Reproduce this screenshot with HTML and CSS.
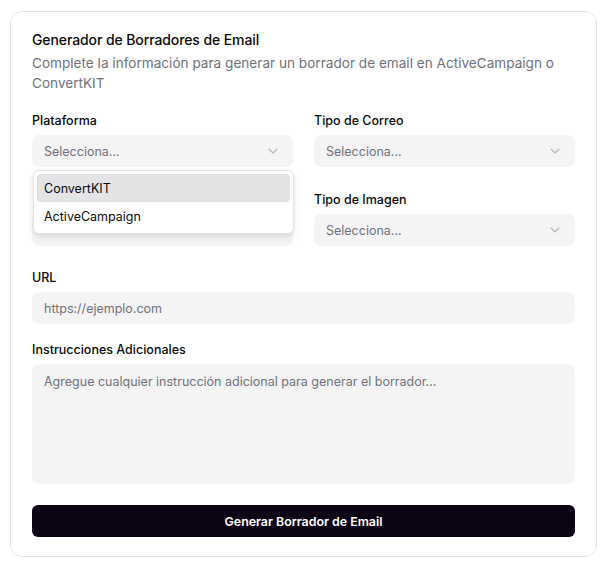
FILE: index.html
```html
<!DOCTYPE html>
<html lang="es">
<head>
<meta charset="utf-8">
<title>Generador de Borradores de Email</title>
<link rel="stylesheet" href="styles.css">
</head>
<body>
<div class="card">
  <h1 class="title">Generador de Borradores de Email</h1>
  <p class="subtitle">Complete la información para generar un borrador de email en ActiveCampaign o ConvertKIT</p>

  <div class="grid">
    <div class="field">
      <label class="label">Plataforma</label>
      <div class="select-wrap">
        <div class="select">
          <span>Selecciona...</span>
          <svg class="chev" width="10" height="6" viewBox="0 0 10 6"><path d="M1 1l4 4 4-4" fill="none" stroke="currentColor" stroke-width="1.1" stroke-linecap="round" stroke-linejoin="round"/></svg>
        </div>
        <div class="menu">
          <div class="item active">ConvertKIT</div>
          <div class="item">ActiveCampaign</div>
        </div>
      </div>
    </div>
    <div class="field">
      <label class="label">Tipo de Correo</label>
      <div class="select">
        <span>Selecciona...</span>
        <svg class="chev" width="10" height="6" viewBox="0 0 10 6"><path d="M1 1l4 4 4-4" fill="none" stroke="currentColor" stroke-width="1.1" stroke-linecap="round" stroke-linejoin="round"/></svg>
      </div>
    </div>
    <div class="field">
      <div class="label">&nbsp;</div>
      <div class="select"></div>
    </div>
    <div class="field">
      <label class="label">Tipo de Imagen</label>
      <div class="select">
        <span>Selecciona...</span>
        <svg class="chev" width="10" height="6" viewBox="0 0 10 6"><path d="M1 1l4 4 4-4" fill="none" stroke="currentColor" stroke-width="1.1" stroke-linecap="round" stroke-linejoin="round"/></svg>
      </div>
    </div>
  </div>

  <div class="field url-field">
    <label class="label">URL</label>
    <div class="input">https://ejemplo.com</div>
  </div>

  <div class="field notes-field">
    <label class="label">Instrucciones Adicionales</label>
    <div class="textarea">Agregue cualquier instrucción adicional para generar el borrador...</div>
  </div>

  <button class="btn">Generar Borrador de Email</button>
</div>
</body>
</html>
```

FILE: styles.css
```css
* { box-sizing: border-box; }
html, body { margin: 0; padding: 0; background: #ffffff; }
body {
  font-family: Inter, "Noto Sans", sans-serif;
  color: #09090b;
  padding: 11px 11px 10px 10px;
}
.card {
  border: 1px solid #e4e4e7;
  border-radius: 12px;
  padding: 18px 21px 19px 21px;
  background: #fff;
}
.title {
  margin: 0;
  font-size: 14px;
  line-height: 20px;
  font-weight: 500;
  letter-spacing: -0.1px;
}
.subtitle {
  margin: 3px 0 0;
  font-size: 13.6px;
  line-height: 20px;
  color: #71717a;
}
.grid {
  display: grid;
  grid-template-columns: 1fr 1fr;
  column-gap: 21px;
  row-gap: 23px;
  margin-top: 18px;
}
.field { display: flex; flex-direction: column; }
.label {
  font-size: 12.5px;
  line-height: 20px;
  font-weight: 500;
  margin-bottom: 4px;
}
.select-wrap { position: relative; }
.select {
  height: 32px;
  border-radius: 7px;
  background: #f4f4f5;
  display: flex;
  align-items: center;
  justify-content: space-between;
  padding: 0 15px 0 12px;
  font-size: 12.5px;
  color: #71717a;
}
.chev { color: #b4b4bb; }
.menu {
  position: absolute;
  top: 35px;
  left: 1px;
  right: -1px;
  background: #fff;
  border: 1px solid #e4e4e7;
  border-radius: 6px;
  box-shadow: 0 4px 8px rgba(0,0,0,0.08), 0 1px 3px rgba(0,0,0,0.06);
  padding: 3px;
  z-index: 5;
}
.item {
  height: 28px;
  display: flex;
  align-items: center;
  padding-left: 7px;
  font-size: 12.5px;
  color: #09090b;
  border-radius: 4px;
}
.item.active { background: #e4e4e7; }
.url-field { margin-top: 22px; }
.input {
  height: 32px;
  border-radius: 7px;
  background: #f4f4f5;
  display: flex;
  align-items: center;
  padding: 0 12px;
  font-size: 12.5px;
  color: #71717a;
}
.notes-field { margin-top: 16px; }
.textarea {
  height: 120px;
  border-radius: 7px;
  background: #f4f4f5;
  padding: 8px 12px;
  font-size: 12.5px;
  line-height: 20px;
  color: #71717a;
}
.btn {
  display: block;
  width: 100%;
  margin-top: 21px;
  height: 32px;
  border: 0;
  border-radius: 6px;
  background: #0c0314;
  color: #fff;
  font-family: Inter, "Noto Sans", sans-serif;
  font-size: 12.4px;
  font-weight: 600;
}
```
